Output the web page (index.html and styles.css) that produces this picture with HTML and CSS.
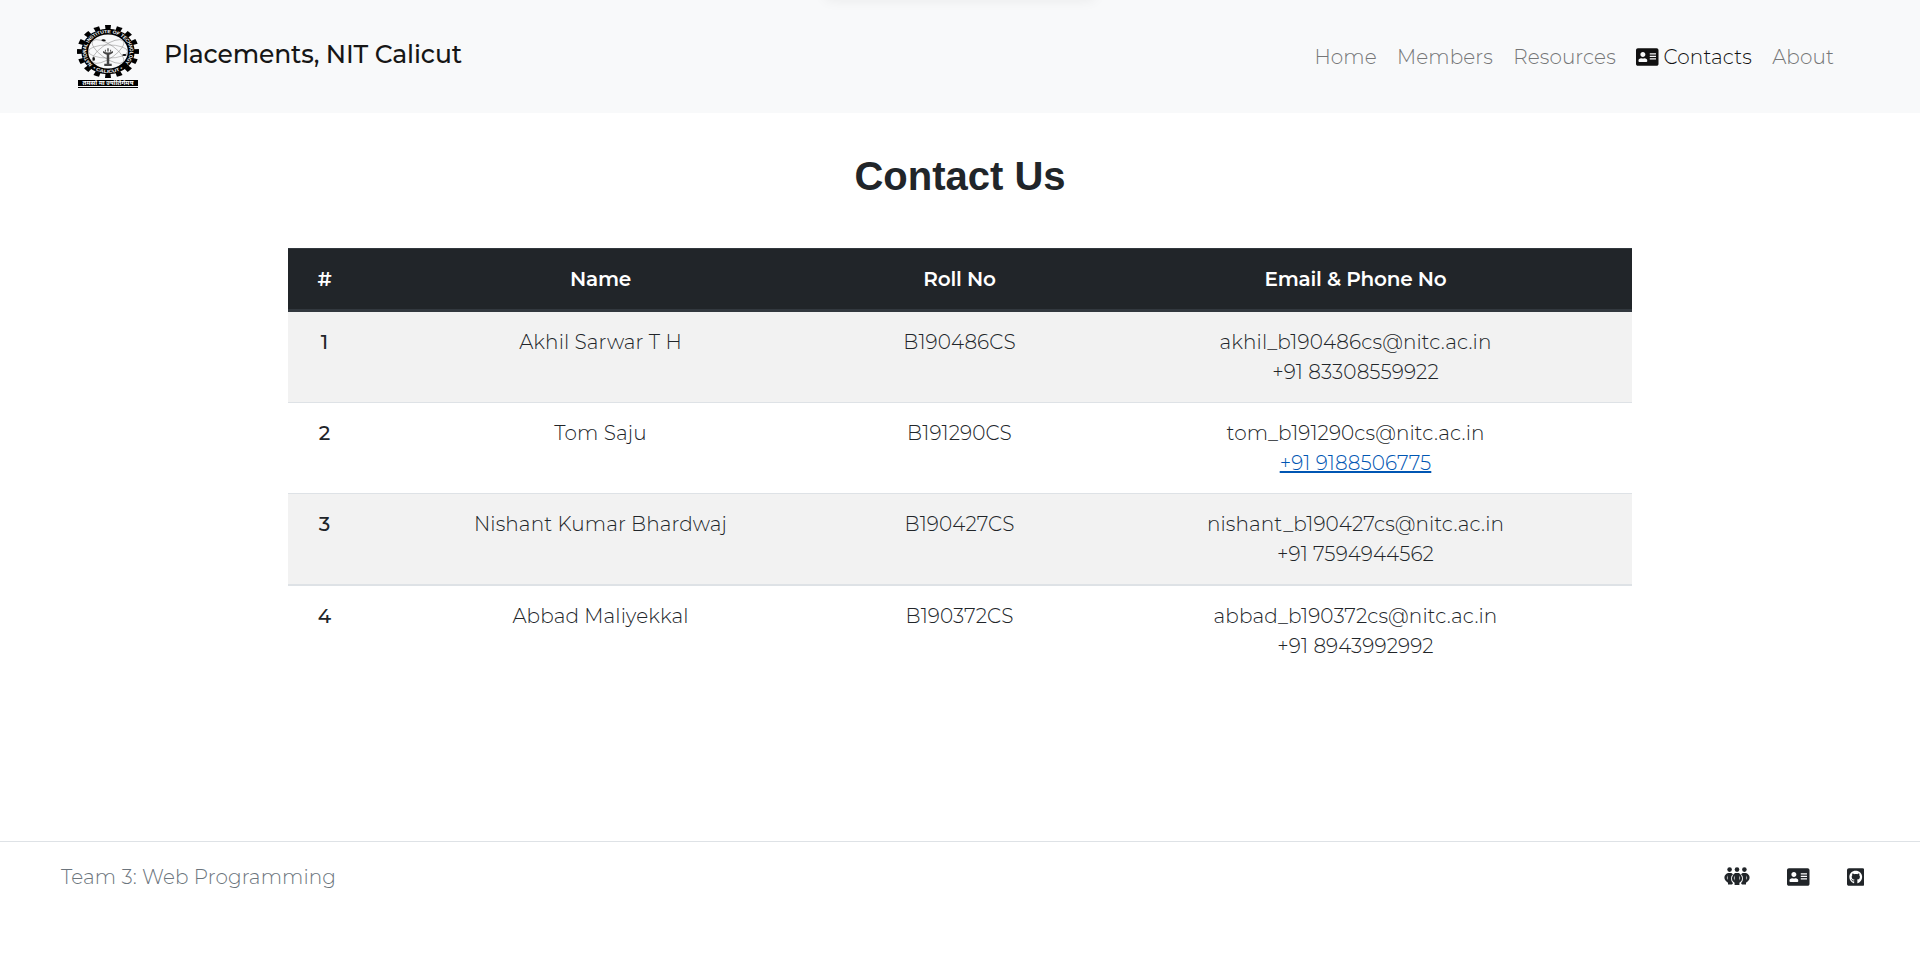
FILE: index.html
```html
<!DOCTYPE html>
<html lang="en">
<head>
<meta charset="utf-8">
<title>Contact Us</title>
<link rel="stylesheet" href="styles.css">
</head>
<body>
<header class="navbar">
  <div class="top-shadow"></div>
  <a class="brand">
    <svg class="brand-logo" viewBox="0 0 62 63" width="62" height="63">
      <g transform="translate(31 26.5) scale(.31 .265)">
        <circle r="92" fill="none" stroke="#000" stroke-width="16" pathLength="32" stroke-dasharray="1 1" stroke-dashoffset=".5"/>
        <circle r="75" fill="#f8f9fa" stroke="#000" stroke-width="22"/>
        <g fill="none" stroke="#8a8a8a" stroke-width="1.8">
          <ellipse rx="63" ry="25"/>
          <ellipse rx="63" ry="25" transform="rotate(40)"/>
          <ellipse rx="63" ry="25" transform="rotate(-40)"/>
        </g>
        <g fill="#111">
          <ellipse cx="-20" cy="-40" rx="7" ry="4" transform="rotate(8)"/>
          <ellipse cx="53" cy="13" rx="7" ry="4"/>
          <ellipse cx="-46" cy="28" rx="4" ry="7"/>
        </g>
        <path d="M-16-2q16 12 32 0v7q-9 7-12 7v34h8v9h-24v-9h8V12q-3 0-12-7zM-2-12h4v12h-4zM-10-7h3v8h-3zM7-7h3v8h-3z" fill="#444"/>
        <path id="ring-top" d="M-49.500 49.500A70 70 0 1 1 49.500 49.500" fill="none"/>
        <path id="ring-low" d="M-50 64A81 81 0 0 0 50 64" fill="none"/>
        <text class="ring-text"><textPath href="#ring-top" textLength="322" lengthAdjust="spacingAndGlyphs">NATIONAL INSTITUTE OF TECHNOLOGY</textPath></text>
        <text class="ring-text"><textPath href="#ring-low" textLength="106" lengthAdjust="spacingAndGlyphs">• CALICUT •</textPath></text>
      </g>
      <path d="M1 55h60v6H1zM1 62h60v1H1z" fill="#000"/>
      <text class="motto" x="31" y="59.8" text-anchor="middle" textLength="51" lengthAdjust="spacingAndGlyphs">तमसो मा ज्योतिर्गमय</text>
    </svg>
    <span class="brand-name">Placements, NIT Calicut</span>
  </a>
  <nav class="nav">
    <a class="nav-link">Home</a>
    <a class="nav-link">Members</a>
    <a class="nav-link">Resources</a>
    <a class="nav-link active"><svg class="icon-card" viewBox="0 0 576 512"><use href="#card"/></svg>Contacts</a>
    <a class="nav-link">About</a>
  </nav>
</header>

<main>
  <h1 class="title">Contact Us</h1>
  <table class="contacts">
    <colgroup><col class="col-no"><col class="col-name"><col class="col-roll"><col class="col-mail"></colgroup>
    <thead>
      <tr><th>#</th><th>Name</th><th>Roll No</th><th>Email &amp; Phone No</th></tr>
    </thead>
    <tbody>
      <tr><th>1</th><td>Akhil Sarwar T H</td><td>B190486CS</td><td>akhil_b190486cs@nitc.ac.in<br>+91 83308559922</td></tr>
      <tr><th>2</th><td>Tom Saju</td><td>B191290CS</td><td>tom_b191290cs@nitc.ac.in<br><a class="phone">+91 9188506775</a></td></tr>
      <tr><th>3</th><td>Nishant Kumar Bhardwaj</td><td>B190427CS</td><td>nishant_b190427cs@nitc.ac.in<br>+91 7594944562</td></tr>
      <tr><th>4</th><td>Abbad Maliyekkal</td><td>B190372CS</td><td>abbad_b190372cs@nitc.ac.in<br>+91 8943992992</td></tr>
    </tbody>
  </table>
</main>

<footer class="footer">
  <span class="team">Team 3: Web Programming</span>
  <div class="footer-icons">
    <svg width="26" height="18" viewBox="0 0 26 18">
      <g fill="#212529" fill-rule="evenodd">
        <circle cx="5.6" cy="2.6" r="2.3"/><circle cx="13" cy="2.6" r="2.3"/><circle cx="20.4" cy="2.6" r="2.3"/>
        <path d="M4 6h3.400L9 7.200Q7 8.500 7 11.500T9 16.200L8 17.500H4V15.800Q.4 13.500.4 10.500T4 6zM3.600 8.200Q2.200 10.600 3.600 13z"/>
        <path d="M22 6h-3.400L17 7.200Q19 8.500 19 11.500T17 16.200L18 17.500h4V15.800Q25.600 13.500 25.600 10.500T22 6zM22.400 8.200Q23.800 10.600 22.400 13z"/>
        <path d="M11 6h4Q18.200 8.200 18.200 11.200T15.400 15.800V18h-4.800V15.800Q7.800 14.200 7.800 11.200T11 6zM10.600 8.600Q9 11 10.600 13.600zM15.400 8.600V13.600Q17 11 15.400 8.600z"/>
      </g>
    </svg>
    <svg class="icon-id" viewBox="0 0 576 512">
      <path id="card" fill="currentColor" d="M528 32H48C21.500 32 0 53.500 0 80v352c0 26.500 21.500 48 48 48h480c26.500 0 48-21.500 48-48V80c0-26.500-21.500-48-48-48zm-352 96c35.300 0 64 28.700 64 64s-28.700 64-64 64-64-28.700-64-64 28.700-64 64-64zm112 236.800c0 10.600-10 19.200-22.400 19.200H86.400C74 384 64 375.400 64 364.800v-19.200c0-31.800 30.100-57.600 67.200-57.600h5c12.300 5.100 25.700 8 39.800 8s27.600-2.900 39.800-8h5c37.100 0 67.200 25.800 67.200 57.600v19.200zM512 312c0 4.400-3.600 8-8 8H360c-4.400 0-8-3.600-8-8v-16c0-4.400 3.600-8 8-8h144c4.400 0 8 3.600 8 8v16zm0-64c0 4.400-3.600 8-8 8H360c-4.400 0-8-3.600-8-8v-16c0-4.400 3.600-8 8-8h144c4.400 0 8 3.600 8 8v16zm0-64c0 4.400-3.600 8-8 8H360c-4.400 0-8-3.600-8-8v-16c0-4.400 3.600-8 8-8h144c4.400 0 8 3.600 8 8v16z"/>
    </svg>
    <svg class="icon-git" viewBox="0 0 448 512">
      <path fill="currentColor" d="M400 32H48C21.500 32 0 53.500 0 80v352c0 26.500 21.500 48 48 48h352c26.500 0 48-21.500 48-48V80c0-26.500-21.500-48-48-48zM277.300 415.700c-8.400 1.500-11.500-3.700-11.500-8 0-5.400.2-33 .2-55.300 0-15.600-5.200-25.500-11.300-30.700 37-4.100 76-9.200 76-73.100 0-18.200-6.500-27.300-17.100-39 1.700-4.300 7.400-22-1.700-45-13.900-4.300-45.700 17.900-45.700 17.900-13.200-3.700-27.500-5.600-41.600-5.600-14.100 0-28.400 1.900-41.600 5.600 0 0-31.800-22.200-45.700-17.900-9.100 22.900-3.500 40.600-1.700 45-10.600 11.700-15.600 20.800-15.600 39 0 63.600 37.300 69 74.300 73.100-4.800 4.300-9.100 11.700-10.600 22.300-9.500 4.300-33.800 11.700-48.300-13.900-9.100-15.800-25.500-17.100-25.500-17.100-16.200-.2-1.100 10.200-1.100 10.200 10.800 5 18.400 24.200 18.400 24.200 9.700 29.700 56.100 19.700 56.100 19.700 0 13.900.2 36.500.2 40.600 0 4.300-3 9.500-11.500 8-66-22.100-112.200-84.900-112.200-158.300 0-91.800 70.200-161.500 162-161.500S388 165.600 388 257.400c.1 73.400-44.700 136.300-110.700 158.300z"/>
    </svg>
  </div>
</footer>
</body>
</html>
```
FILE: styles.css
```css
* { box-sizing: border-box; }
body {
  margin: 0;
  background: #fff;
  color: #212529;
  font: 300 20px/30px "Montserrat", "Open Sans", "Noto Sans", sans-serif;
  letter-spacing: .1px;
}

/* Navigation bar */
.navbar {
  position: relative;
  height: 113px;
  padding: 25px 86px 0 77px;
  display: flex;
  justify-content: space-between;
  align-items: flex-start;
  background: #f8f9fa;
  overflow: hidden;
}
.top-shadow {
  position: absolute;
  top: -14px;
  left: 826px;
  width: 268px;
  height: 12px;
  box-shadow: 0 1px 14px rgba(0, 0, 0, .08);
}
.brand { display: flex; gap: 25px; }
.brand-logo { display: block; letter-spacing: 0; }
.brand-name {
  margin-top: 10px;
  font: 500 25px/38px "Montserrat", "Inter", sans-serif;
  letter-spacing: -.13px;
  color: #161616;
}
.ring-text { font: 700 17px "Liberation Sans", sans-serif; fill: #fff; }
.motto { font: 700 5.5px "Noto Sans", "Liberation Sans", sans-serif; fill: #fff; }
.nav { display: flex; gap: 20.3px; padding-top: 17px; }
.nav-link { display: flex; color: #757677; white-space: nowrap; }
.nav-link.active { color: #111; }
.icon-card { width: 22.5px; height: 20px; margin: 5px 5px 0 0; }

/* Contact table */
.title {
  margin: 39px 0 48px;
  font: 700 40px/48px "Liberation Sans", Arial, sans-serif;
  letter-spacing: 0;
  text-align: center;
}
.contacts {
  width: 1344px;
  margin: 0 auto;
  table-layout: fixed;
  border-collapse: separate;
  border-spacing: 0;
  text-align: center;
}
.col-no { width: 73px; }
.col-name { width: 479px; }
.col-roll { width: 239px; }
.contacts th, .contacts td { padding: 15px; vertical-align: top; }
.contacts th { font-weight: 500; }
.contacts thead th {
  font-weight: 600;
  letter-spacing: -.2px;
  color: #fff;
  background: #212529;
  border-top: 1px solid #32383e;
  border-bottom: 3px solid #32383e;
}
.contacts tbody tr:nth-child(odd) > * { background: #f2f2f2; }
.contacts tbody tr + tr > * { border-top: 1px solid #dee2e6; }
.contacts tbody tr:last-child > * { border-top-width: 2px; }
.phone {
  color: #0056b3;
  text-decoration: underline 2px;
  text-underline-offset: 1px;
  text-decoration-skip-ink: none;
}

/* Footer */
.footer {
  margin-top: 165px;
  padding: 20px 56px 0 61px;
  display: flex;
  justify-content: space-between;
  border-top: 1px solid #dee2e6;
}
.team { color: #6c757d; }
.footer-icons { display: flex; align-items: flex-start; padding-top: 5px; }
.icon-id { width: 22.5px; height: 20px; margin-left: 37px; }
.icon-git { width: 17.5px; height: 20px; margin-left: 37px; }
```
